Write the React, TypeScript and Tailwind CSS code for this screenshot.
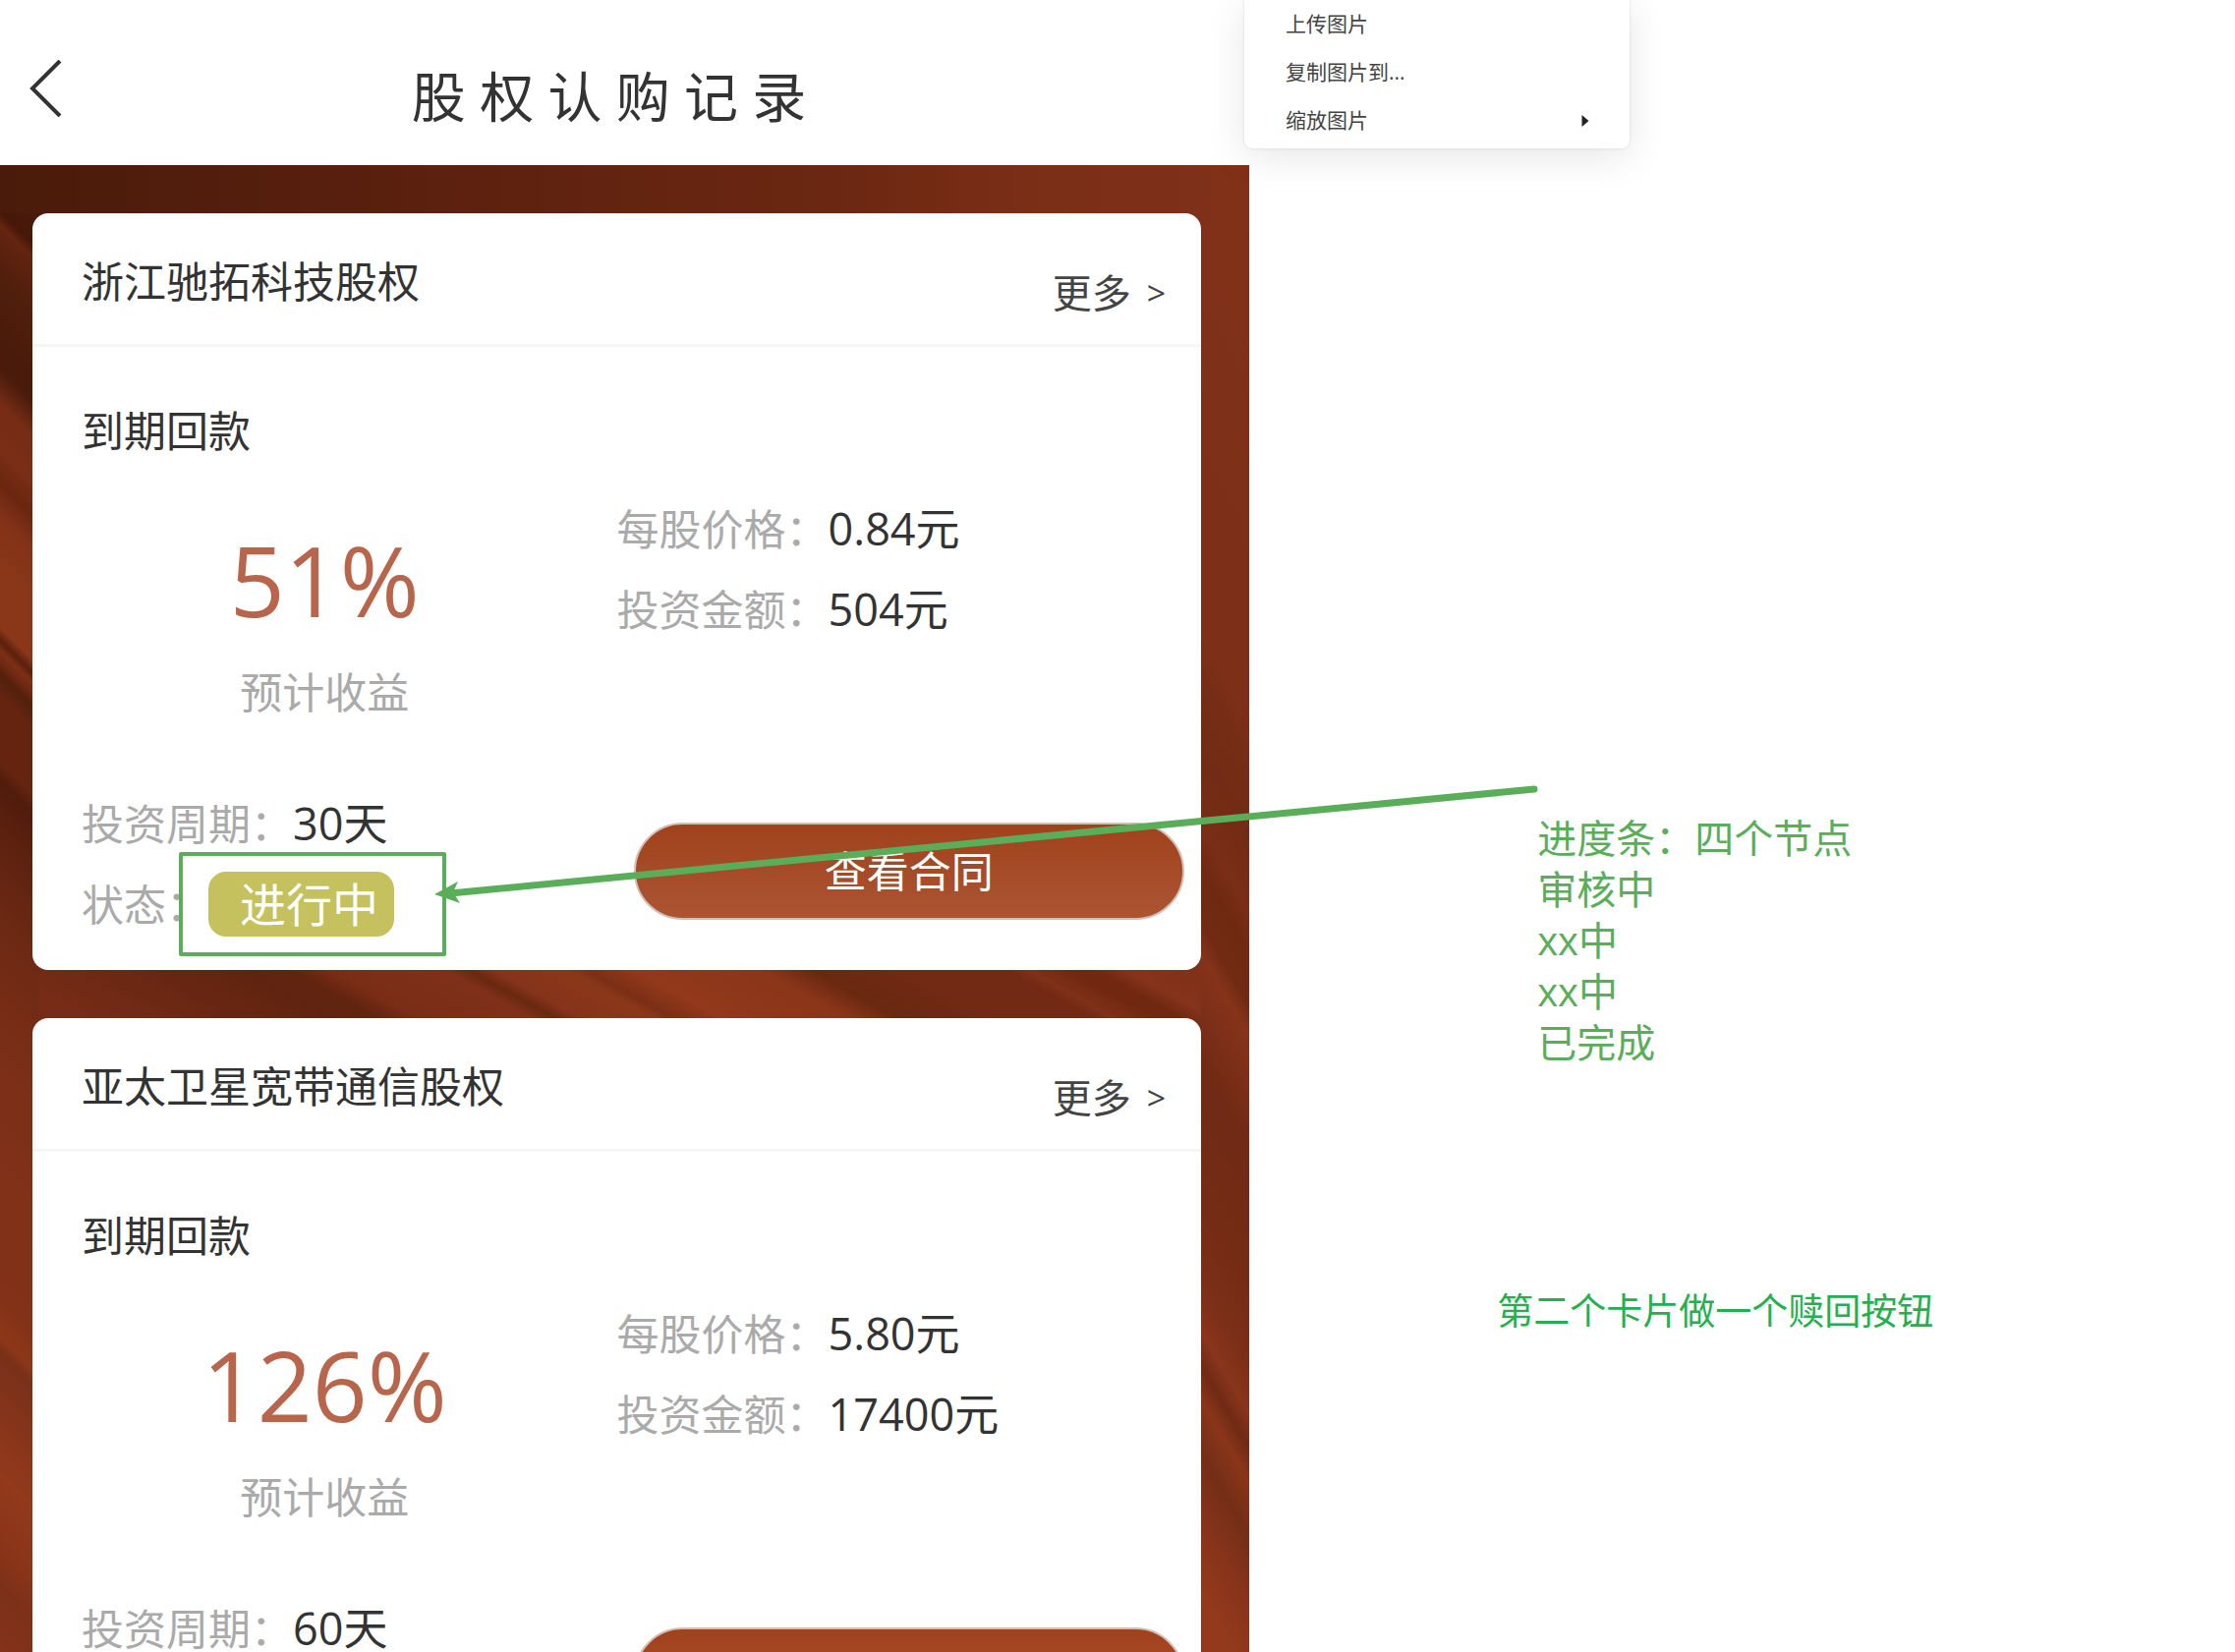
import React from "react";

type Holding = {
  name: string;
  rate: string;
  price: string;
  amount: string;
  period: string;
  status: string;
};

const holdings: Holding[] = [
  { name: "浙江驰拓科技股权", rate: "51%", price: "0.84元", amount: "504元", period: "30天", status: "进行中" },
  { name: "亚太卫星宽带通信股权", rate: "126%", price: "5.80元", amount: "17400元", period: "60天", status: "进行中" },
];

type Stop = [number, string];

const topStops: Stop[] = [
  [0, "#4a1a0a"], [100, "#4e1c0b"], [400, "#5a200e"], [850, "#6b2712"], [1050, "#7b2e16"], [1271, "#803118"],
];

const leftStops: Stop[] = [
  [0, "#4a1a0a"], [48, "#471809"], [60, "#642410"], [100, "#54200d"], [175, "#4a1a0a"], [207, "#4a1a0a"],
  [241, "#752c14"], [290, "#7a2e15"], [323, "#6a2610"], [357, "#833218"], [415, "#8a3719"], [470, "#8a3619"],
  [484, "#5a200c"], [494, "#7d2f16"], [505, "#6f2912"], [518, "#52200c"], [540, "#642410"], [608, "#642410"],
  [627, "#501c0b"], [675, "#5c210f"], [772, "#6d2914"], [917, "#7d2f17"], [1158, "#833218"], [1192, "#8d3719"],
  [1208, "#793018"], [1332, "#93391c"], [1400, "#8a3519"], [1448, "#7d3018"], [1513, "#85331a"],
];

const middleStops: Stop[] = [
  [0, "#762c17"], [250, "#60230f"], [300, "#62240f"], [340, "#7a2d15"], [455, "#803018"], [480, "#6a2810"],
  [505, "#85331a"], [580, "#8a3719"], [600, "#7b2f16"], [650, "#93381b"], [780, "#8a3519"], [830, "#6a2810"],
  [880, "#6e2912"], [950, "#732a14"], [1030, "#732a14"], [1050, "#803017"], [1090, "#702910"], [1120, "#702910"],
  [1150, "#85331a"], [1271, "#7d2f17"],
];

const rightStops: Stop[] = [
  [0, "#803118"], [483, "#7d2f17"], [530, "#752d15"], [600, "#722b15"], [675, "#7a2e16"], [714, "#702911"],
  [772, "#722b13"], [801, "#85331a"], [840, "#803018"], [917, "#702a15"], [1062, "#752c15"], [1139, "#7d2f17"],
  [1187, "#88351b"], [1221, "#702a15"], [1255, "#8a351a"], [1310, "#742e17"], [1371, "#85331a"], [1448, "#93391c"],
  [1513, "#93391c"],
];

function Stops({ stops }: { stops: Stop[] }) {
  const total = stops[stops.length - 1][0];
  return (
    <>
      {stops.map(([at, color]) => (
        <stop key={at} offset={at / total} stopColor={color} />
      ))}
    </>
  );
}

/* Brushed copper backdrop behind the cards */
function Backdrop() {
  return (
    <svg className="absolute inset-0 size-full" viewBox="0 0 1271 1513" preserveAspectRatio="none" aria-hidden="true">
      <defs>
        <linearGradient id="top" gradientUnits="userSpaceOnUse" x1="0" y1="0" x2="1271" y2="0">
          <Stops stops={topStops} />
        </linearGradient>
        <linearGradient id="left" gradientUnits="userSpaceOnUse" x1="0" y1="0" x2="-756" y2="756">
          <Stops stops={leftStops} />
        </linearGradient>
        <linearGradient id="middle" gradientUnits="userSpaceOnUse" x1="0" y1="820" x2="302" y2="280">
          <Stops stops={middleStops} />
        </linearGradient>
        <linearGradient id="right" gradientUnits="userSpaceOnUse" x1="1222" y1="0" x2="562" y2="386">
          <Stops stops={rightStops} />
        </linearGradient>
      </defs>
      <rect width="1271" height="1513" fill="url(#top)" />
      <rect y="800" x="20" width="1220" height="90" fill="url(#middle)" />
      <rect y="49" width="40" height="1464" fill="url(#left)" />
      <rect x="1221" y="60" width="50" height="1453" fill="url(#right)" />
    </svg>
  );
}

function Field({ label, value }: { label: string; value: string }) {
  return (
    <div className="flex h-[82px] items-center">
      <dt className="pt-0.5 text-[43px] text-[#aaa]">{label}</dt>
      <dd className="text-[45px] text-[#333]">{value}</dd>
    </div>
  );
}

function HoldingCard({ item }: { item: Holding }) {
  return (
    <article className="shrink-0 rounded-2xl bg-white leading-[60px]">
      <header className="flex h-[136px] items-center justify-between border-b-3 border-[#f6f6f6] pr-9 pl-[50px]">
        <h2 className="pt-1.5 text-[43px] text-[#333]">{item.name}</h2>
        <a href="#more" className="flex items-center gap-4 pt-7 text-[40px] text-[#444]">
          更多 <span className="text-[34px]">&gt;</span>
        </a>
      </header>
      <h3 className="px-[50px] pt-14 text-[43px] text-[#333]">到期回款</h3>
      <div className="grid h-[328px] grid-cols-2">
        <div className="pt-[46px] text-center">
          <p className="text-[98px] leading-[150px] text-[#b8654b]">{item.rate}</p>
          <p className="pt-2.5 text-[43px] text-[#aaa]">预计收益</p>
        </div>
        <dl className="pt-7">
          <Field label="每股价格：" value={item.price} />
          <Field label="投资金额：" value={item.amount} />
        </dl>
      </div>
      <div className="grid grid-cols-2 pb-[26px]">
        <dl className="pl-[50px]">
          <Field label="投资周期：" value={item.period} />
          <div className="flex h-[82px] items-center">
            <dt className="pt-0.5 text-[43px] text-[#aaa]">状态：</dt>
            <dd className="h-[66px] rounded-[18px] bg-[#c4c15e] pr-4 pl-8 text-[47px] leading-[66px] text-white">
              {item.status}
            </dd>
          </div>
        </dl>
        <div className="px-[17px] pt-10">
          <button
            type="button"
            className="h-[99px] w-full rounded-full border-2 border-[#d3bdb5] bg-linear-to-b from-[#a0421c] to-[#ac5432] text-[43px] text-white"
          >
            查看合同
          </button>
        </div>
      </div>
    </article>
  );
}

function ContextMenu() {
  return (
    <div
      role="menu"
      className="absolute top-0 left-[1266px] w-[392px] rounded-b-lg bg-white pb-1 text-[21px] text-[#444] shadow-[0_8px_40px_rgba(0,0,0,0.1),0_0_3px_rgba(0,0,0,0.12)]"
    >
      {["上传图片", "复制图片到...", "缩放图片"].map((label) => (
        <button
          key={label}
          type="button"
          role="menuitem"
          className="flex h-[49px] w-full items-center justify-between pr-[41px] pl-[42px]"
        >
          {label}
          {label === "缩放图片" && (
            <svg className="h-3 w-2" viewBox="0 0 8 12" aria-hidden="true">
              <path d="M0.5 0L7.5 6L0.5 12Z" fill="#222" />
            </svg>
          )}
        </button>
      ))}
    </div>
  );
}

/* Marker box around the status and the arrow pointing to it */
function Markup() {
  return (
    <svg
      className="pointer-events-none absolute inset-0 size-full"
      viewBox="0 0 2274 1681"
      preserveAspectRatio="none"
      aria-hidden="true"
    >
      <rect x="184" y="869" width="268" height="102" fill="none" stroke="#5aae5a" strokeWidth="4" strokeLinejoin="round" />
      <path d="M1561 803L458 909" stroke="#5aae5a" strokeWidth="7" strokeLinecap="round" />
      <path d="M442 910L466 897L461 908L468 919Z" fill="#5aae5a" />
    </svg>
  );
}

export default function App() {
  return (
    <main className="relative flex h-screen bg-white font-['Open_Sans','Noto_Sans_CJK_SC',sans-serif]">
      <section className="flex w-[55.9%] flex-col">
        <header className="relative flex h-[168px] shrink-0 items-center justify-center">
          <button type="button" aria-label="返回" className="absolute top-[61px] left-[29px]">
            <svg className="h-[58px] w-[34px]" viewBox="0 0 34 58" aria-hidden="true">
              <path d="M32 1L4 29L32 57" fill="none" stroke="#333" strokeWidth="4" />
            </svg>
          </button>
          <h1 className="pt-7 pr-8 text-[55px] leading-[80px] text-[#333]">股 权 认 购 记 录</h1>
        </header>
        <div className="relative min-h-0 flex-1">
          <Backdrop />
          <div className="relative flex h-full flex-col gap-[49px] overflow-y-auto pt-[49px] pr-[49px] pl-[33px] [scrollbar-width:none]">
            {holdings.map((item) => (
              <HoldingCard key={item.name} item={item} />
            ))}
          </div>
        </div>
      </section>
      <aside className="flex-1 pt-[827px] pl-[252px]">
        <div className="pl-[41px] text-[40px] leading-[52px] text-[#5aae5a]">
          <p>进度条：四个节点</p>
          <p>审核中</p>
          <p>xx中</p>
          <p>xx中</p>
          <p>已完成</p>
        </div>
        <p className="pt-[221px] text-[37px] leading-[52px] text-[#22b14c]">第二个卡片做一个赎回按钮</p>
      </aside>
      <Markup />
      <ContextMenu />
    </main>
  );
}
